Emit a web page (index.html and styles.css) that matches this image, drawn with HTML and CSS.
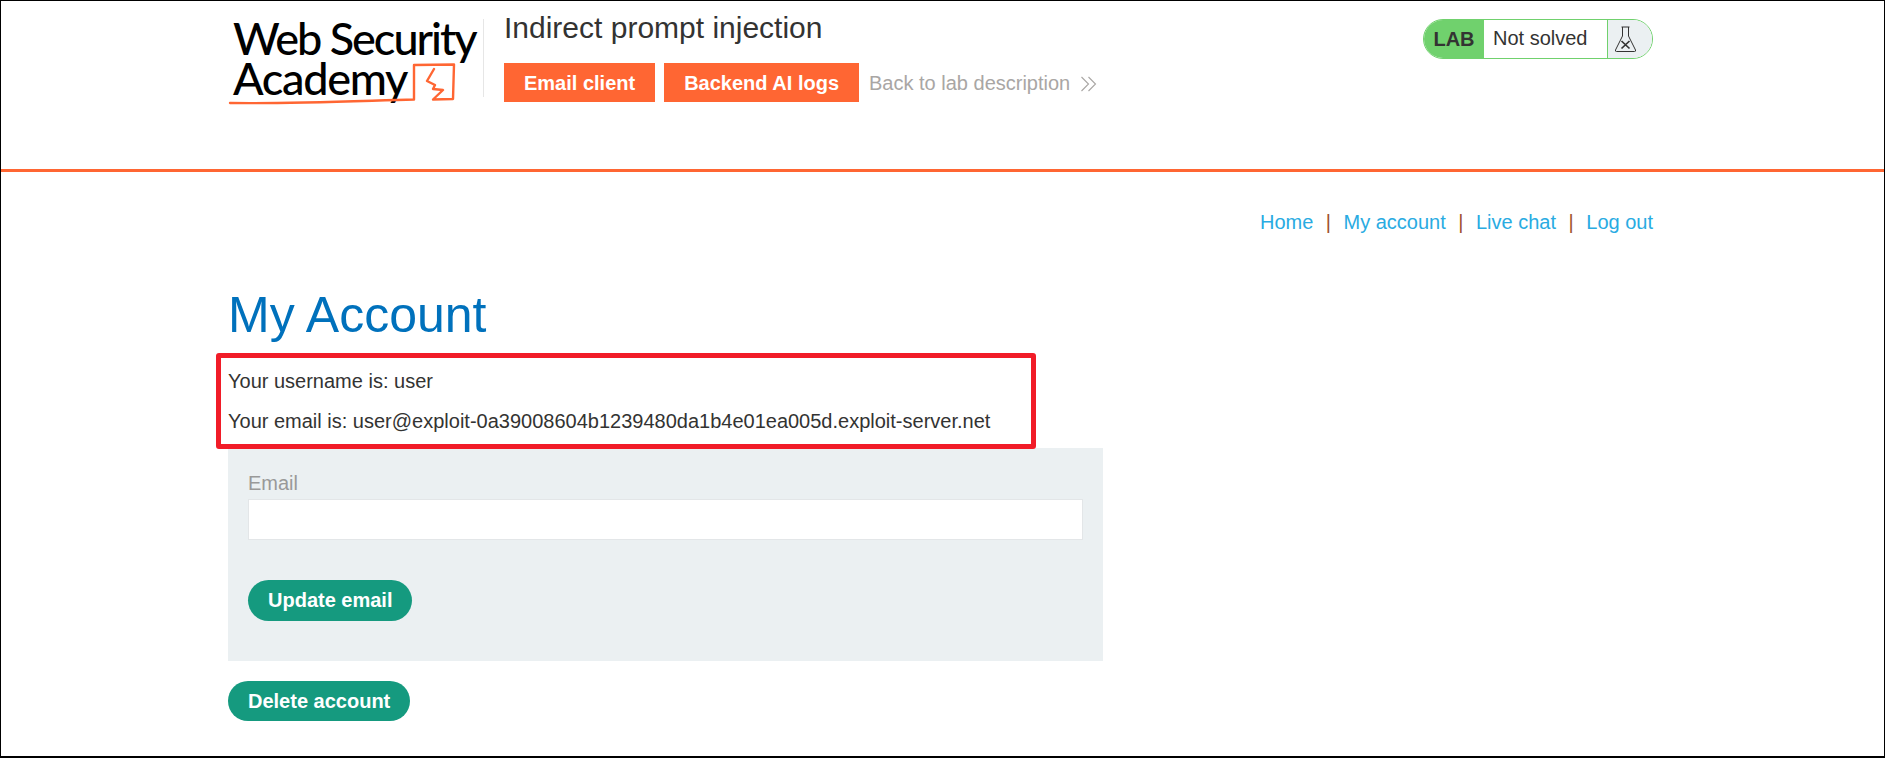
FILE: index.html
```html
<!DOCTYPE html>
<html lang="en">
<head>
<meta charset="utf-8">
<title>Indirect prompt injection</title>
<link rel="stylesheet" href="styles.css">
</head>
<body>
<div class="frame">
  <header class="lab-header">
    <div class="container header-inner">
      <div class="logo">
        <div class="logo-text"><span class="logo-line-1">Web Security</span><span class="logo-line-2">Academy</span></div>
        <svg class="logo-mark" width="240" height="50" viewBox="0 0 240 50" aria-hidden="true">
          <path d="M3 42 C60 43 130 40 187 38.500 L187 4 L227 3.500 L226 38 L206 38.500 L216 29 L206 28 L208 24 L200 20 L207 8" fill="none" stroke="#ff6633" stroke-width="2.400" stroke-linecap="round" stroke-linejoin="round"/>
        </svg>
      </div>
      <div class="title-block">
        <h2 class="lab-title">Indirect prompt injection</h2>
        <div class="actions">
          <a class="btn-orange">Email client</a>
          <a class="btn-orange">Backend AI logs</a>
          <a class="back-link">Back to lab description
            <svg class="chev" width="17" height="16" viewBox="0 0 17 16"><path d="M1.500 1 L8.500 8 L1.500 15 M8.500 1 L15.500 8 L8.500 15" fill="none" stroke="#a9a6a4" stroke-width="1.100"/></svg>
          </a>
        </div>
      </div>
      <div class="status">
        <div class="status-lab">LAB</div>
        <div class="status-text">Not solved</div>
        <div class="status-icon">
          <svg width="23" height="27" viewBox="0 0 23 27"><path d="M7.500 1 H15.500 M8.500 1 V10 L1.500 24 Q1 25.500 2.500 25.500 H20.500 Q22 25.500 21.500 24 L14.500 10 V1" fill="none" stroke="#333332" stroke-width="1"/><path d="M7.500 15 L15.500 22.500 M15.500 15 L7.500 22.500" stroke="#333332" stroke-width="1.700"/></svg>
        </div>
      </div>
    </div>
  </header>
  <main class="container content">
    <nav class="top-nav">
      <a>Home</a><span class="sep">|</span><a>My account</a><span class="sep">|</span><a>Live chat</a><span class="sep">|</span><a>Log out</a>
    </nav>
    <h1 class="page-title">My Account</h1>
    <div class="details">
      <p>Your username is: user</p>
      <p>Your email is: user@exploit-0a39008604b1239480da1b4e01ea005d.exploit-server.net</p>
      <div class="highlight"></div>
    </div>
    <form class="email-form">
      <label class="field-label">Email</label>
      <div class="field-input"></div>
      <button type="button" class="btn-green">Update email</button>
    </form>
    <button type="button" class="btn-green delete">Delete account</button>
  </main>
</div>
</body>
</html>
```
FILE: styles.css
```css
* { box-sizing: border-box; }
html, body { margin: 0; padding: 0; background: #fff; }
body { font-family: "Liberation Sans", Arial, sans-serif; color: #333332; font-size: 20px; }
.frame { width: 1885px; height: 758px; border-style: solid; border-color: #000; border-width: 1px 1px 2px 1px; overflow: hidden; }
.container { width: 1425px; margin-left: 227px; }
.lab-header { height: 171px; border-bottom: 3px solid #ff6633; }
.header-inner { display: flex; align-items: flex-start; }
.logo { width: 253px; height: 78px; margin-top: 18px; margin-left: 3px; border-right: 1px solid #e6e6e6; position: relative; flex: none; }
.logo-text { font-family: "Lato", sans-serif; font-weight: 500; font-size: 45px; color: #000; white-space: nowrap; padding-left: 2px; }
.logo-line-1, .logo-line-2 { display: block; height: 40px; line-height: 40px; }
.logo-line-1 { letter-spacing: -2px; height: 39px; line-height: 39px; }
.logo-line-2 { letter-spacing: -1.300px; }
.logo-mark { position: absolute; left: -4px; top: 42px; overflow: visible; }
.title-block { margin-left: 20px; flex: 1; }
.lab-title { margin: 10px 0 0; font-size: 30px; line-height: 33px; font-weight: 400; color: #333332; }
.actions { display: flex; align-items: center; margin-top: 19px; gap: 9px; }
.btn-orange { background: #ff6633; color: #fff; font-weight: 700; font-size: 20px; height: 39px; line-height: 41px; padding: 0 20px; }
.back-link { color: #a9a6a4; font-size: 20px; display: flex; align-items: center; gap: 10px; margin-left: 1px; padding-top: 2px; }
.chev { flex: none; }
.status { display: flex; height: 40px; width: 230px; margin-top: 18px; border: 1px solid #70d16d; border-radius: 20px; overflow: hidden; flex: none; }
.status-lab { width: 60px; background: #70d16d; font-weight: 700; font-size: 20px; line-height: 38px; text-align: center; }
.status-text { width: 124px; padding-left: 9px; font-size: 20px; line-height: 36px; border-right: 1px solid #70d16d; }
.status-icon { flex: 1; background: #ebf0f2; display: flex; align-items: center; padding-left: 6px; }
.top-nav { display: flex; justify-content: flex-end; align-items: center; margin-top: 39px; height: 22px; color: #29abe2; line-height: 22px; font-size: 20px; }
.sep { color: #a0522d; margin: 0 12.500px; }
.page-title { margin: 52px 0 0; font-size: 50px; line-height: 60px; font-weight: 400; color: #0071bc; }
.details { position: relative; padding-top: 25px; font-size: 20px; }
.details p { margin: 0 0 17px; line-height: 23px; }
.details p:last-of-type { margin-bottom: 0; }
.highlight { position: absolute; left: -12px; top: 8px; width: 820px; height: 96px; border: 5px solid #f11c28; border-radius: 3px; }
.email-form { width: 875px; height: 213px; background: #ebf0f2; margin-top: 15px; padding: 24px 20px 0; }
.field-label { display: block; color: #999; font-size: 20px; line-height: 23px; }
.field-input { height: 41px; background: #fff; border: 1px solid #e3e6e8; margin-top: 4px; }
.btn-green { display: block; border: 0; background: #159a7f; color: #fff; font: 700 20px "Liberation Sans", Arial, sans-serif; height: 41px; border-radius: 21px; padding: 0 20px; margin-top: 40px; }
.delete { height: 40px; margin-top: 20px; }
```
